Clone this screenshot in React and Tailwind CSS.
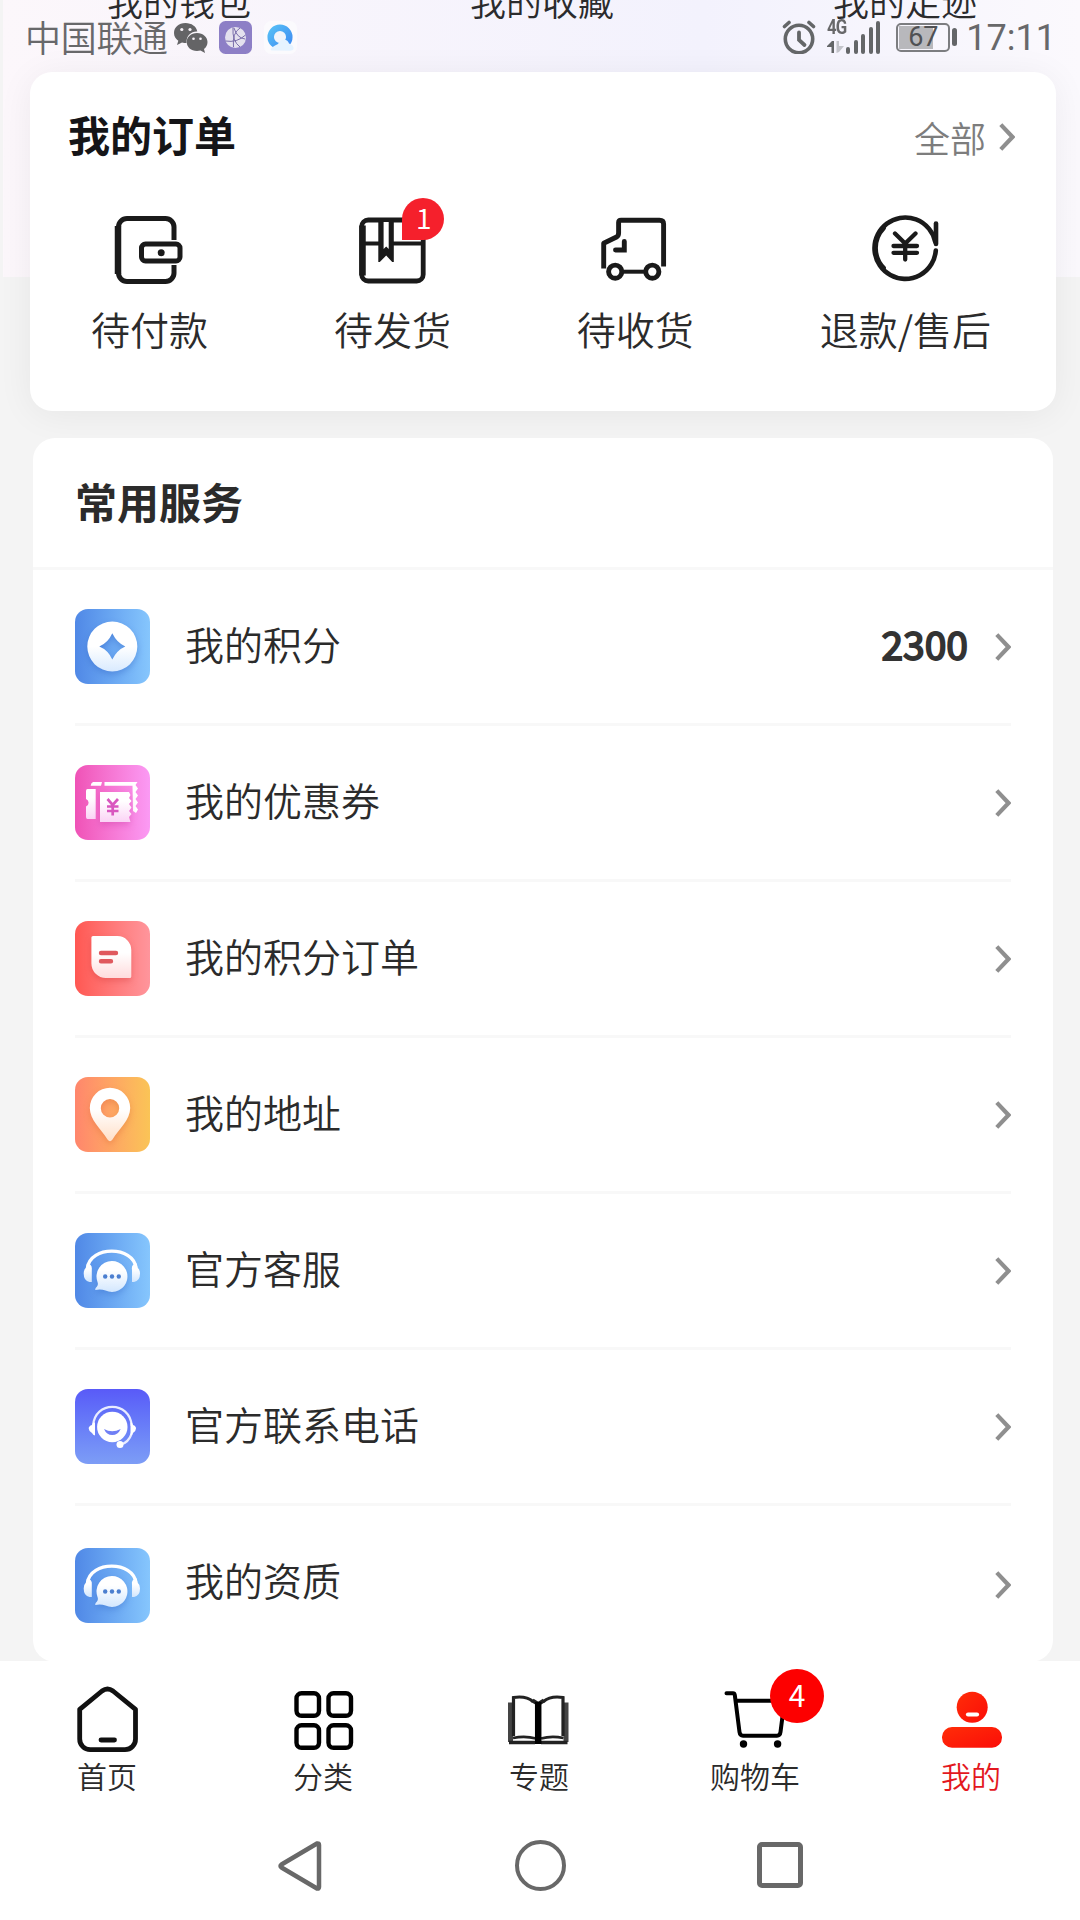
import React from 'react';

const Wallet = () => (
  <svg viewBox="0 0 72 72" className="w-[72px] h-[72px]" fill="none" stroke="#1a1a1a" strokeWidth="5">
    <path d="M60 27V14a8.500 8.500 0 0 0-8.500-8.500H13A8.500 8.500 0 0 0 4.500 14V60a8.500 8.500 0 0 0 8.500 8.500H51.500A8.500 8.500 0 0 0 60 60V52" />
    <path d="M4 13V61" strokeWidth="6.500" />
    <rect x="27.500" y="31" width="38.500" height="17" rx="4" />
    <circle cx="47.200" cy="39.700" r="3.500" fill="#1a1a1a" stroke="none" />
  </svg>
);

const Parcel = () => (
  <svg viewBox="0 0 72 72" className="w-[72px] h-[72px]" fill="none" stroke="#1a1a1a">
    <rect x="5.700" y="7" width="61.500" height="61" rx="6.500" strokeWidth="4.800" />
    <path d="M6.500 12.500V62.500" strokeWidth="6.500" />
    <path d="M6 30.500H25M35 30.500H66" strokeWidth="4" />
    <path d="M22.300 6V49h1.500L30.200 42.500 36.200 49h1.600V6z" fill="#1a1a1a" stroke="none" />
    <path d="M27.600 9V36L30.200 33.500 32.700 36V9z" fill="#fff" stroke="none" />
  </svg>
);

const Truck = () => (
  <svg viewBox="0 0 72 72" className="w-[72px] h-[72px]" fill="none" stroke="#1a1a1a" strokeWidth="4.900">
    <path d="M4.700 53V30.300L17.500 24Q19.600 22.800 19.600 20V9.500Q19.600 7.200 22 7.200H60.500Q64.600 7.200 64.600 11V51" strokeLinecap="square" strokeLinejoin="round" />
    <path d="M25.300 28.500V37H16.500" strokeLinecap="round" />
    <circle cx="16.200" cy="58.700" r="6.600" />
    <circle cx="53.300" cy="58.700" r="6.600" />
    <path d="M23 58.700H47" strokeWidth="4" />
  </svg>
);

const Refund = () => (
  <svg viewBox="0 0 72 72" className="w-[72px] h-[72px]" fill="none" stroke="#1a1a1a" strokeWidth="4.600" strokeLinecap="round">
    <path d="M66.800 37.500A30.700 30.700 0 1 1 66.200 28.700" />
    <path d="M14.500 15A29 29 0 0 0 14.500 55" strokeWidth="4.800" />
    <path d="M67 10.500V31" />
    <path d="M26 20.500 36.200 30.500 46.500 20.500M36.200 30.500V46.500M24.500 33H48M24.500 39.800H48" strokeWidth="4.300" />
  </svg>
);

const PointsIcon = () => (
  <svg viewBox="0 0 75 75" className="size-full">
    <defs>
      <linearGradient id="pt" x2="0" y2="1"><stop offset=".5" stopColor="#fff" /><stop offset="1" stopColor="#d9eafe" /></linearGradient>
    </defs>
    <path className="drop-shadow-[0_3px_3px_rgba(40,90,190,0.35)]" fillRule="evenodd" d="M37.300 12.500a25 25 0 1 1 0 50 25 25 0 0 1 0-50zM37.300 24.300Q42 34 50.300 37.500 42 41 37.300 50.500 33 41 24.300 37.500 33 34 37.300 24.300z" fill="url(#pt)" />
  </svg>
);

const CouponIcon = () => (
  <svg viewBox="0 0 75 75" className="size-full">
    <defs>
      <linearGradient id="cp" x2="0" y2="1"><stop offset=".3" stopColor="#fff" /><stop offset="1" stopColor="#fbd3f5" /></linearGradient>
    </defs>
    <path d="M18 17H27L26 20.700H15.700Q15.800 18 18 17zM29.500 17H62.500L60.500 20 63 23.500 60.500 27 63 30.500 60.500 34 63 37.500 60.500 41 63 44.500 61 48 58 46 57.500 20.700H29.500z" fill="#fff" />
    <path d="M12.500 24H20.700V54H12.500Q11 54 11 52V41.500A4 4 0 0 0 11 34V26Q11 24 12.500 24z" fill="url(#cp)" />
    <path className="drop-shadow-[0_3px_3px_rgba(190,40,150,0.3)]" d="M25 27H54L55.500 30 54 33 56.500 36 54 39 56.500 42.500 54 46 56.500 49 54 52 55.500 57H25z" fill="url(#cp)" />
    <path d="M32.500 34 37.700 40 43 34M37.700 40V50.500M32 41.500H43.500M32 46H43.500" stroke="#d957bf" strokeWidth="2.700" fill="none" />
  </svg>
);

const PointsOrderIcon = () => (
  <svg viewBox="0 0 75 75" className="size-full">
    <defs>
      <linearGradient id="po" x2="0" y2="1"><stop offset=".4" stopColor="#fff" /><stop offset="1" stopColor="#ffdcdd" /></linearGradient>
    </defs>
    <path className="drop-shadow-[0_3px_3px_rgba(200,40,40,0.3)]" d="M18 15H42.500A14 14 0 0 1 56.300 29V55.500Q56.300 57 54.800 57H31A14.500 14.500 0 0 1 16.400 42.500V16.500Q16.400 15 18 15z" fill="url(#po)" />
    <path d="M26 32H41M26 40.300H36" stroke="#e0595e" strokeWidth="4.400" strokeLinecap="round" />
  </svg>
);

const AddressIcon = () => (
  <svg viewBox="0 0 75 75" className="size-full">
    <defs>
      <linearGradient id="ad" x2="0" y2="1"><stop offset=".4" stopColor="#fff" /><stop offset="1" stopColor="#ffdfc8" /></linearGradient>
    </defs>
    <path className="drop-shadow-[0_3px_3px_rgba(210,90,40,0.3)]" fillRule="evenodd" d="M35 10.800A20.200 20.200 0 0 1 55.200 31C55.200 43 44 52 37.500 62.500Q35 66 32.500 62.500C26 52 14.800 43 14.800 31A20.200 20.200 0 0 1 35 10.800zM35 22a9.200 9.200 0 1 0 0 18.400 9.200 9.200 0 0 0 0-18.400z" fill="url(#ad)" />
  </svg>
);

const ServiceIcon = () => (
  <svg viewBox="0 0 75 75" className="size-full">
    <defs>
      <linearGradient id="sv" x2="0" y2="1"><stop offset=".3" stopColor="#fff" /><stop offset="1" stopColor="#d3e7fe" /></linearGradient>
    </defs>
    <path d="M12.500 35C15 12.500 58.500 12.500 61 35" stroke="#fff" strokeWidth="3.400" fill="none" />
    <path d="M12 30.500Q17.500 31 16.800 37V49H14.500Q8.700 48 8.700 40.500 8.700 36.500 11 34.500zM61.500 30.500Q56 31 57 37V49H59Q65 48 65 40.500 65 36.500 62.500 34.500z" fill="url(#sv)" />
    <path className="drop-shadow-[0_3px_3px_rgba(40,90,190,0.3)]" d="M36.800 28A15.500 15.500 0 1 1 30.500 57.600Q26 56 20.500 57 19.500 55.800 22 53.500 23.500 51.500 22.500 49A15.500 15.500 0 0 1 36.800 28z" fill="url(#sv)" />
    <g fill="#4c7fd0"><circle cx="30.200" cy="43.500" r="2.200" /><circle cx="37" cy="43.500" r="2.200" /><circle cx="43.800" cy="43.500" r="2.200" /></g>
  </svg>
);

const PhoneIcon = () => (
  <svg viewBox="0 0 75 75" className="size-full">
    <circle cx="37.300" cy="38" r="15.200" fill="#fff" />
    <path d="M29 40Q37 44.500 45.700 40 43 46 37.300 46 31.500 46 29 40z" fill="#6f7ff5" />
    <path d="M18 37C19.500 11.500 55 11.500 56.800 37M57 44Q53.500 53.500 46 55.500" stroke="#e9ecff" strokeWidth="2.200" fill="none" />
    <path d="M18 33.500H20V46.500Q18 46 17 44 13.700 42 13.700 39.500T17 36zM57 33.500H55.500V46.500Q57 46 58 44 61 42 61 39.500T58 36z" fill="#fff" />
    <circle cx="45" cy="55.500" r="3.500" fill="#fff" />
  </svg>
);

const Home = () => (
  <svg viewBox="0 0 64 72" className="w-16 h-[72px]" fill="none" stroke="#111" strokeWidth="4.800" strokeLinejoin="round">
    <path d="M3.700 25.300 26 7Q31.500 3 37 7L59.500 25.300V55A10.500 10.500 0 0 1 49 65.700H14.500A10.500 10.500 0 0 1 3.700 55z" />
    <path d="M25 56H38.500" strokeLinecap="round" />
  </svg>
);

const Category = () => (
  <svg viewBox="0 0 64 72" className="w-16 h-[72px]" fill="none" stroke="#000" strokeWidth="4.400">
    <rect x="4.500" y="9.300" width="22.500" height="22.500" rx="5" />
    <rect x="36.500" y="9.300" width="22.500" height="22.500" rx="5" />
    <rect x="4.500" y="41.300" width="22.500" height="22.500" rx="5" />
    <rect x="36.500" y="41.300" width="22.500" height="22.500" rx="5" />
  </svg>
);

const Book = () => (
  <svg viewBox="0 0 64 72" className="w-16 h-[72px] blur-[0.6px]" fill="none" stroke="#222">
    <path d="M2.500 18.500V58M58 18.500V58" stroke="#444" strokeWidth="5" />
    <path d="M5.500 52V13.500Q18 11.500 25 17.500M55 52V13.500Q42.500 11.500 35.500 17.500" strokeWidth="3.200" />
    <path d="M5 54Q17 51.500 28 54.500M55.500 54Q43.500 51.500 33 54.500" strokeWidth="2.800" />
    <path d="M1 58.500H27M33 58.500H59.500" strokeWidth="3.400" />
    <path d="M24.500 16.500 30.200 20 36 16.500" strokeWidth="4" />
    <path d="M30.200 18V60" stroke="#000" strokeWidth="6.500" />
  </svg>
);

const Cart = () => (
  <svg viewBox="0 0 64 72" className="w-16 h-[72px]" fill="none" stroke="#000" strokeWidth="4" strokeLinecap="round" strokeLinejoin="round">
    <path d="M2.500 9.300H9Q10.500 9.300 10.800 11L15.500 48Q16 51.700 19 51.700H53Q56 51.700 56.500 48L60.500 16.700H12" />
    <circle cx="19.500" cy="60" r="3.700" fill="#000" stroke="none" />
    <circle cx="53.600" cy="60" r="3.700" fill="#000" stroke="none" />
  </svg>
);

const Me = () => (
  <svg viewBox="0 0 64 72" className="w-16 h-[72px]">
    <defs>
      <linearGradient id="me" x2="1" y2="1"><stop stopColor="#ff2d08" /><stop offset="1" stopColor="#fb0d08" /></linearGradient>
    </defs>
    <circle cx="32.200" cy="23.300" r="15.500" fill="url(#me)" />
    <rect x="2" y="43" width="60" height="20.800" rx="10" fill="url(#me)" />
    <path d="M28 30.500H37" stroke="#fff" strokeWidth="4.200" strokeLinecap="round" />
  </svg>
);

const Chevron = () => (
  <svg viewBox="0 0 16 28" className="w-4 h-7 shrink-0" fill="none" stroke="#8f8f8f" strokeWidth="4.200">
    <path d="M1.800 1.600 13.500 14 1.800 26.400" />
  </svg>
);

const orders = [
  { name: '待付款', icon: Wallet },
  { name: '待发货', icon: Parcel, badge: 1 },
  { name: '待收货', icon: Truck },
  { name: '退款/售后', icon: Refund },
];

const services = [
  { name: '我的积分', icon: PointsIcon, bg: 'bg-linear-to-r from-[#5088e6] to-[#86c6fd]', value: '2300' },
  { name: '我的优惠券', icon: CouponIcon, bg: 'bg-linear-to-r from-[#ef52b6] to-[#fb9af4]' },
  { name: '我的积分订单', icon: PointsOrderIcon, bg: 'bg-linear-to-r from-[#ff5752] to-[#ff959c]' },
  { name: '我的地址', icon: AddressIcon, bg: 'bg-linear-to-r from-[#ff866c] to-[#fac456]' },
  { name: '官方客服', icon: ServiceIcon, bg: 'bg-linear-to-r from-[#5088e6] to-[#86c6fd]' },
  { name: '官方联系电话', icon: PhoneIcon, bg: 'bg-linear-to-b from-[#595af8] to-[#7d9df6]' },
  { name: '我的资质', icon: ServiceIcon, bg: 'bg-linear-to-r from-[#5088e6] to-[#86c6fd]' },
];

const tabs = [
  { name: '首页', icon: Home },
  { name: '分类', icon: Category },
  { name: '专题', icon: Book },
  { name: '购物车', icon: Cart, badge: 4 },
  { name: '我的', icon: Me, active: true },
];

function StatusBar() {
  return (
    <div className="absolute inset-x-0 top-0 h-[74px] pl-[25px] pr-[24px] flex items-center text-[#68686a]">
      <span className="-mt-[2px] text-[36px] leading-9 tracking-[-0.3px] font-[350]">中国联通</span>
      {/* WeChat */}
      <svg viewBox="0 0 36 34" className="ml-[5px] w-9 h-[34px]">
        <path d="M12.500 3C5.500 3 1 7.500 1 13c0 3.500 1.800 6 4.300 7.800L4 25l5-2.500c1.500.4 3 .5 4.500.5C13 15 19 11 24.300 11.500 23.500 6.500 18.500 3 12.500 3z" fill="#646466" />
        <path d="M24 13c-6 0-10.300 4-10.300 9s4.300 9 10.300 9c1.200 0 2.500-.2 3.500-.5L32 33l-1-4c2.200-1.600 3.500-4 3.500-7 0-5-4.500-9-10.500-9z" fill="#646466" />
        <g fill="#f7f2f8"><circle cx="8.800" cy="9.500" r="1.600" /><circle cx="17" cy="9.500" r="1.600" /><circle cx="20.500" cy="18.800" r="1.300" /><circle cx="27.500" cy="18.800" r="1.300" /></g>
      </svg>
      <svg viewBox="0 0 33 33" className="ml-[10px] w-[33px] h-[33px]">
        <rect width="33" height="33" rx="6.500" fill="#8d7fc6" />
        <circle cx="16.500" cy="16.500" r="10.500" fill="#e4e1ee" />
        <path d="M14 6.500Q13 20 21 26M21 7Q13 12 14.500 26M6.500 20Q18 22 26.500 14M15 7Q18 17 26 18" stroke="#6d61a3" strokeWidth=".9" fill="none" />
      </svg>
      <svg viewBox="0 0 33 33" className="ml-3 w-[33px] h-[33px]">
        <defs>
          <linearGradient id="qb" x2="1" y2="1"><stop stopColor="#55bdf6" /><stop offset="1" stopColor="#3f8df2" /></linearGradient>
        </defs>
        <rect width="33" height="33" rx="7" fill="#fbfafd" />
        <circle cx="16" cy="16" r="9.300" stroke="url(#qb)" strokeWidth="6.500" fill="#f0f4fb" />
        <path d="M8 29.500Q5.500 29 8 26.500 11 24 14 23 16 18.500 20 18.500 24 19 25 22.500 30 24 29.500 28 29 29.800 26 29.800z" fill="#e6f3ff" />
      </svg>

      <svg viewBox="0 0 34 34" className="ml-auto w-[34px] h-[34px]" fill="none" stroke="#646668" strokeLinecap="round">
        <circle cx="17" cy="19" r="13.700" strokeWidth="3.600" />
        <path d="M17 12.500V20L22.500 25" strokeWidth="3.800" />
        <path d="M2.500 6.500 7 2.500M31.500 6.500 27 2.500" strokeWidth="3.600" />
      </svg>
      <div className="ml-[11px] w-[18px] h-[34px] flex flex-col justify-between">
        <span className="-mt-[3px] font-['Roboto'] text-[21px] leading-[20px] font-bold tracking-[-1px] scale-x-80 origin-left">4G</span>
        <svg viewBox="0 0 18 13" className="w-[18px] h-[13px]">
          <path d="M0 5 5 0H7V12H4.500V6H0z" fill="#646668" />
          <path d="M9.500 0H12V5H17L12 11 9.500 12z" fill="#c3c4ca" />
        </svg>
      </div>
      <div className="flex items-end gap-[3.600px] h-[34px] ml-px">
        <i className="w-1 h-[7px] rounded-full bg-[#646668]" />
        <i className="w-1 h-[14px] rounded-full bg-[#646668]" />
        <i className="w-1 h-5 rounded-full bg-[#646668]" />
        <i className="w-1 h-[27px] rounded-full bg-[#646668]" />
        <i className="w-1 h-[33px] rounded-full bg-[#646668]" />
      </div>
      <div className="ml-4 w-[54px] h-[29px] rounded-[5px] border-2 border-[#7c7d80] p-px">
        <div className="h-full bg-linear-to-r from-[#b8b8bc] from-70% to-transparent to-70% flex items-center justify-center font-['Roboto'] text-[27px] leading-none text-[#505154]">67</div>
      </div>
      <div className="ml-[2px] w-[5px] h-[18px] rounded-full bg-[#646668]" />
      <span className="mt-px ml-[9px] font-['Roboto'] text-[36px] leading-9">17:11</span>
    </div>
  );
}

function OrderCard() {
  return (
    <section className="w-[1026px] h-[339px] rounded-[22px] bg-white shadow-[0_4px_36px_rgba(0,0,0,0.06)]">
      <div className="h-[83px] flex justify-between items-end pl-[38px] pr-[41px]">
        <h2 className="text-[42px] leading-[42px] font-bold text-[#151518]">我的订单</h2>
        <div className="flex items-center gap-[13px] text-[36px] leading-9 font-[350] text-[#7d7d7d]">
          <span>全部</span>
          <Chevron />
        </div>
      </div>
      <div className="mt-[58px] pl-[61px] pr-[65px] flex justify-between">
        {orders.map(order => (
          <div key={order.name} className="relative flex flex-col items-center">
            <order.icon />
            <span className="mt-6 text-[39px] leading-[39px] font-[350] text-[#2b2b2b]">{order.name}</span>
            {order.badge && (
              <span className="absolute -top-[15px] left-[68px] w-[42px] h-[42px] pl-[2px] pb-[4px] rounded-full rounded-bl-none bg-[#f5202c] flex items-center justify-center text-[28px] leading-none text-white">
                {order.badge}
              </span>
            )}
          </div>
        ))}
      </div>
    </section>
  );
}

function ServiceCard() {
  return (
    <section className="mt-[27px] w-[1020px] h-[1224px] rounded-[22px] bg-white">
      <h2 className="h-[132px] border-b-3 border-[#f8f8f8] pl-[42px] pt-[42px] text-[42px] leading-[42px] font-bold text-[#2b2b2b]">常用服务</h2>
      <ul className="px-[42px]">
        {services.map((item, i) => {
          const last = i === services.length - 1;
          return (
            <li key={item.name} className={`h-[156px] flex items-center border-b-3 ${last ? 'border-transparent' : 'border-[#f8f8f8]'}`}>
              <div className={`w-[75px] h-[75px] rounded-[13px] ${item.bg} ${last ? 'mt-[6px]' : ''}`}>
                <item.icon />
              </div>
              <span className="-mt-[7px] ml-[35px] text-[39px] leading-[39px] font-[350] text-[#2b2b2b]">{item.name}</span>
              <span className="-mt-[7px] ml-auto mr-[27px] text-[39px] leading-[39px] text-[#333] [-webkit-text-stroke:1.8px_#333]">{item.value}</span>
              <div className={last ? 'mt-[5px]' : ''}>
                <Chevron />
              </div>
            </li>
          );
        })}
      </ul>
    </section>
  );
}

function TabBar() {
  return (
    <nav className="relative h-[160px] bg-white grid grid-cols-5 pt-[23px]">
      {tabs.map(tab => (
        <div key={tab.name} className="relative flex flex-col items-center">
          <tab.icon />
          <span className={`mt-[4px] -ml-[2px] text-[30px] leading-[30px] font-[350] ${tab.active ? 'text-[#e3181e]' : 'text-[#2b2b2b]'}`}>{tab.name}</span>
          {tab.badge && (
            <span className="absolute -top-[15px] left-[122px] w-[54px] h-[54px] pb-[4px] rounded-full bg-[#fd0000] flex items-center justify-center text-[30px] leading-none text-white">
              {tab.badge}
            </span>
          )}
        </div>
      ))}
    </nav>
  );
}

function SystemNav() {
  return (
    <div className="flex-1 bg-white pl-[277px] pr-[277px] pt-[19px] flex justify-between items-start">
      <svg viewBox="0 0 46 52" className="w-[46px] h-[52px]" fill="none" stroke="#686868" strokeWidth="4.500" strokeLinejoin="round">
        <path d="M40 3.500Q42 3 42 5V47Q42 49 40 48.500L4.500 27.500Q2.500 26 4.500 24.500z" />
      </svg>
      <div className="w-[51px] h-[51px] rounded-full border-[4.500px] border-[#686868]" />
      <div className="mt-[2px] w-[46px] h-[46px] rounded-[5px] border-[5px] border-[#686868]" />
    </div>
  );
}

export default function App() {
  return (
    <div className="relative w-[1080px] h-[1920px] overflow-hidden bg-[#f4f4f4] flex flex-col font-['Noto_Sans_CJK_SC',sans-serif]">
      <div className="absolute top-0 left-[3px] right-0 h-[277px] bg-linear-to-r from-[#fcf7fb] via-[#f3f2fd] via-65% to-[#fbf9fd]" />
      <div className="relative h-[72px] pl-[107px] pr-[103px] flex justify-between text-[36px] leading-9 font-[350] text-[#2b2b2d]">
        <span className="-mt-[18px]">我的钱包</span>
        <span className="-mt-[18px]">我的收藏</span>
        <span className="-mt-[18px]">我的足迹</span>
      </div>
      <div className="relative pl-[30px]">
        <OrderCard />
      </div>
      <div className="relative h-[1250px] pl-[33px]">
        <ServiceCard />
      </div>
      <TabBar />
      <SystemNav />
      <StatusBar />
    </div>
  );
}
